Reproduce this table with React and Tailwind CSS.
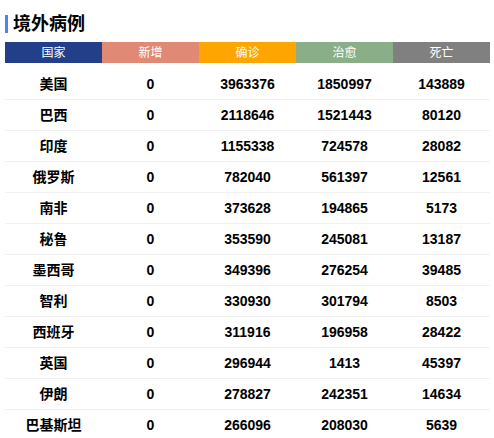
const rows = [
    ['美国', 0, 3963376, 1850997, 143889],
    ['巴西', 0, 2118646, 1521443, 80120],
    ['印度', 0, 1155338, 724578, 28082],
    ['俄罗斯', 0, 782040, 561397, 12561],
    ['南非', 0, 373628, 194865, 5173],
    ['秘鲁', 0, 353590, 245081, 13187],
    ['墨西哥', 0, 349396, 276254, 39485],
    ['智利', 0, 330930, 301794, 8503],
    ['西班牙', 0, 311916, 196958, 28422],
    ['英国', 0, 296944, 1413, 45397],
    ['伊朗', 0, 278827, 242351, 14634],
    ['巴基斯坦', 0, 266096, 208030, 5639],
];

const headers = [
    {label: '国家', bg: 'bg-[#233f8a]'},
    {label: '新增', bg: 'bg-[#e08a75]'},
    {label: '确诊', bg: 'bg-[#ffa500]'},
    {label: '治愈', bg: 'bg-[#8aaf88]'},
    {label: '死亡', bg: 'bg-[#808080]'},
];

function App() {
    return (
        <div className="bg-white w-[494px] h-[438px] overflow-hidden font-['Liberation_Sans','Noto_Sans_CJK_SC',sans-serif] text-black">
            <div className="flex items-center h-[18px] mt-[15px] px-[5px]">
                <span className="w-[3px] h-[18px] bg-[#4f7ef6]" />
                <h2 className="ml-[5px] text-[18px] font-bold leading-none">境外病例</h2>
            </div>

            <div className="mx-[5px] mt-[9px] w-[485px]">
                <div className="grid grid-cols-5 h-[21px]">
                    {headers.map((h) => (
                        <div key={h.label} className={`${h.bg} text-white text-[12px] flex items-center justify-center`}>
                            {h.label}
                        </div>
                    ))}
                </div>
                <div className="pt-[6px]">
                    {rows.map((r) => (
                        <div key={r[0]} className="grid grid-cols-5 h-[31px] border-b border-[#f1f1f1] text-[14px] font-bold">
                            {r.map((v, i) => (
                                <div key={i} className="flex items-center justify-center">{v}</div>
                            ))}
                        </div>
                    ))}
                </div>
            </div>
        </div>
    );
}

export default App
